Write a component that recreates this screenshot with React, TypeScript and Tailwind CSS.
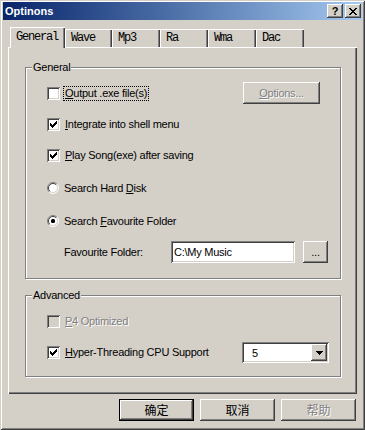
import React from 'react';

// classic win32 bevels
const raised =
  'shadow-[inset_-1px_-1px_#404040,inset_1px_1px_#fff,inset_-2px_-2px_#808080,inset_2px_2px_#d4d0c8]';
const sunken =
  'shadow-[inset_1px_1px_#808080,inset_-1px_-1px_#fff,inset_2px_2px_#404040,inset_-2px_-2px_#d4d0c8]';
const disabledText = 'text-[#808080] [text-shadow:1px_1px_0_#fff]';

const tabs = [
  { name: 'General', w: 'w-[55px]' },
  { name: 'Wave', w: 'w-[47px]' },
  { name: 'Mp3', w: 'w-[48px]' },
  { name: 'Ra', w: 'w-[48px]' },
  { name: 'Wma', w: 'w-[48px]' },
  { name: 'Dac', w: 'w-[48px]' },
];

const Check: React.FC<{ checked?: boolean; disabled?: boolean }> = ({ checked, disabled }) => (
  <span
    className={`flex h-[13px] w-[13px] shrink-0 items-center justify-center ${
      disabled ? 'bg-[#d4d0c8]' : 'bg-white'
    } ${sunken}`}
  >
    {checked && (
      <svg width="7" height="7" viewBox="0 0 7 7" shapeRendering="crispEdges">
        <path
          fill="#000"
          d="M6 0h1v1h-1z M5 1h2v1h-2z M0 2h1v1h-1z M4 2h3v1h-3z M0 3h2v1h-2z M3 3h3v1h-3z M0 4h5v1h-5z M1 5h3v1h-3z M2 6h1v1h-1z"
        />
      </svg>
    )}
  </span>
);

const Radio: React.FC<{ checked?: boolean }> = ({ checked }) => (
  <svg width="12" height="12" viewBox="0 0 12 12" className="shrink-0">
    <circle cx="6" cy="6" r="5" fill="#fff" />
    <path d="M2.1 9.9 A5.5 5.5 0 0 1 9.9 2.1" fill="none" stroke="#808080" />
    <path d="M9.9 2.1 A5.5 5.5 0 0 1 2.1 9.9" fill="none" stroke="#fff" />
    <path d="M2.8 9.2 A4.5 4.5 0 0 1 9.2 2.8" fill="none" stroke="#404040" />
    <path d="M9.2 2.8 A4.5 4.5 0 0 1 2.8 9.2" fill="none" stroke="#d4d0c8" />
    {checked && <rect x="4" y="4" width="4" height="4" rx="1.5" fill="#000" />}
  </svg>
);

const Label: React.FC<{ children: React.ReactNode; focus?: boolean; disabled?: boolean }> = ({
  children,
  focus,
  disabled,
}) => (
  <span
    className={`ml-[3px] border px-[1px] leading-[13px] ${
      focus ? 'border-dotted border-black' : 'border-transparent'
    } ${disabled ? disabledText : ''}`}
  >
    {children}
  </span>
);

const App: React.FC = () => {
  return (
    <div className="flex h-[430px] w-[365px] flex-col bg-[#d4d0c8] font-['Liberation_Sans',Arial,sans-serif] text-[11px] tracking-[-0.25px] text-black shadow-[inset_1px_1px_#d4d0c8,inset_-1px_-1px_#404040,inset_2px_2px_#fff,inset_-2px_-2px_#808080]">
      {/* title bar */}
      <div className="mx-[3px] mt-[2px] flex h-[18px] items-center bg-gradient-to-r from-[#0a246a] to-[#a6caf0] pl-[2px] pr-[1px]">
        <span className="text-[11px] font-bold tracking-normal text-white">Optinons</span>
        <div className="ml-auto flex gap-[2px]">
          <button className={`flex h-[14px] w-[16px] items-center justify-center bg-[#d4d0c8] ${raised}`}>
            <span className="text-[11px] font-bold leading-none">?</span>
          </button>
          <button className={`flex h-[14px] w-[16px] items-center justify-center bg-[#d4d0c8] ${raised}`}>
            <svg width="8" height="7" viewBox="0 0 8 7" shapeRendering="crispEdges">
              <path
                fill="#000"
                d="M0 0h2v1h-2z M6 0h2v1h-2z M1 1h2v1h-2z M5 1h2v1h-2z M2 2h4v1h-4z M3 3h2v1h-2z M2 4h4v1h-4z M1 5h2v1h-2z M5 5h2v1h-2z M0 6h2v1h-2z M6 6h2v1h-2z"
              />
            </svg>
          </button>
        </div>
      </div>

      {/* tab strip */}
      <div className="mt-[7px] flex h-[20px] items-end pl-[10px] font-['Liberation_Mono','Courier_New',monospace] text-[12px] tracking-[-1.2px]">
        {tabs.map((t, i) =>
          i === 0 ? (
            <div
              key={t.name}
              className={`relative z-10 mb-[-1px] flex h-[21px] ${t.w} items-center bg-[#d4d0c8] pb-[1px] pl-[6px] shadow-[inset_1px_1px_#fff,inset_-1px_0_#404040,inset_-2px_0_#808080]`}
            >
              {t.name}
            </div>
          ) : (
            <div
              key={t.name}
              className={`flex h-[18px] ${t.w} items-center pl-[6px] shadow-[inset_1px_1px_#fff,inset_-1px_0_#404040,inset_-2px_0_#808080]`}
            >
              {t.name}
            </div>
          )
        )}
      </div>

      {/* tab page */}
      <div className="mx-[8px] h-[347px] pt-[14px] pl-[17px] shadow-[inset_1px_1px_#fff,inset_-1px_-1px_#404040,inset_-2px_-2px_#808080]">
        <fieldset className="w-[316px] border border-[#808080] shadow-[inset_1px_1px_#fff,1px_1px_#fff]">
          <legend className="ml-[6px] bg-[#d4d0c8] px-[1px] leading-[13px]">General</legend>
          <div className="flex flex-col pt-[8px] pb-[15px]">
            <div className="flex h-[22px] items-center pl-[21px]">
              <Check />
              <Label focus>
                <u>O</u>utput .exe file(s)
              </Label>
              <button
                className={`ml-auto mr-[20px] flex h-[22px] w-[77px] items-center justify-center bg-[#d4d0c8] ${raised} ${disabledText}`}
              >
                <u>O</u>ptions...
              </button>
            </div>
            <div className="mt-[9px] flex h-[22px] items-center pl-[21px]">
              <Check checked />
              <Label>
                <u>I</u>ntegrate into shell menu
              </Label>
            </div>
            <div className="mt-[9px] flex h-[22px] items-center pl-[21px]">
              <Check checked />
              <Label>
                <u>P</u>lay Song(exe) after saving
              </Label>
            </div>
            <div className="mt-[11px] flex h-[22px] items-center pl-[21px]">
              <Radio />
              <Label>
                Search Hard <u>D</u>isk
              </Label>
            </div>
            <div className="mt-[11px] flex h-[22px] items-center pl-[21px]">
              <Radio checked />
              <Label>
                Search <u>F</u>avourite Folder
              </Label>
            </div>
            <div className="mt-[9px] flex h-[22px] items-center pl-[38px]">
              <span className="w-[107px]">Favourite Folder:</span>
              <div className={`flex h-[22px] w-[124px] items-center bg-white pl-[3px] ${sunken}`}>C:\My Music</div>
              <button className={`ml-[8px] flex h-[22px] w-[25px] items-center justify-center bg-[#d4d0c8] ${raised}`}>
                ...
              </button>
            </div>
          </div>
        </fieldset>

        <fieldset className="mt-[10px] w-[316px] border border-[#808080] shadow-[inset_1px_1px_#fff,1px_1px_#fff]">
          <legend className="ml-[6px] bg-[#d4d0c8] px-[1px] leading-[13px]">Advanced</legend>
          <div className="flex flex-col pt-[9px] pb-[13px]">
            <div className="flex h-[21px] items-center pl-[21px]">
              <Check disabled />
              <Label disabled>
                <u>P</u>4 Optimized
              </Label>
            </div>
            <div className="mt-[10px] flex h-[21px] items-center pl-[21px]">
              <Check checked />
              <Label>
                <u>H</u>yper-Threading CPU Support
              </Label>
              <div className={`ml-auto mr-[11px] flex h-[21px] w-[87px] bg-white p-[2px] ${sunken}`}>
                <span className="flex flex-1 items-center pl-[8px] pt-[1px]">5</span>
                <span className={`flex w-[16px] items-center justify-center bg-[#d4d0c8] ${raised}`}>
                  <svg width="7" height="4" viewBox="0 0 7 4" shapeRendering="crispEdges">
                    <path fill="#000" d="M0 0h7v1h-7z M1 1h5v1h-5z M2 2h3v1h-3z M3 3h1v1h-1z" />
                  </svg>
                </span>
              </div>
            </div>
          </div>
        </fieldset>
      </div>

      {/* dialog buttons */}
      <div className="mt-[5px] flex justify-end gap-[6px] pr-[9px] font-['Noto_Sans_CJK_SC',sans-serif] text-[12px] tracking-normal">
        <button className={`flex h-[22px] w-[75px] items-center justify-center border border-black bg-[#d4d0c8] ${raised}`}>
          确定
        </button>
        <button className={`flex h-[22px] w-[75px] items-center justify-center bg-[#d4d0c8] ${raised}`}>取消</button>
        <button className={`flex h-[22px] w-[75px] items-center justify-center bg-[#d4d0c8] ${raised} ${disabledText}`}>
          帮助
        </button>
      </div>
    </div>
  );
};

export default App;
